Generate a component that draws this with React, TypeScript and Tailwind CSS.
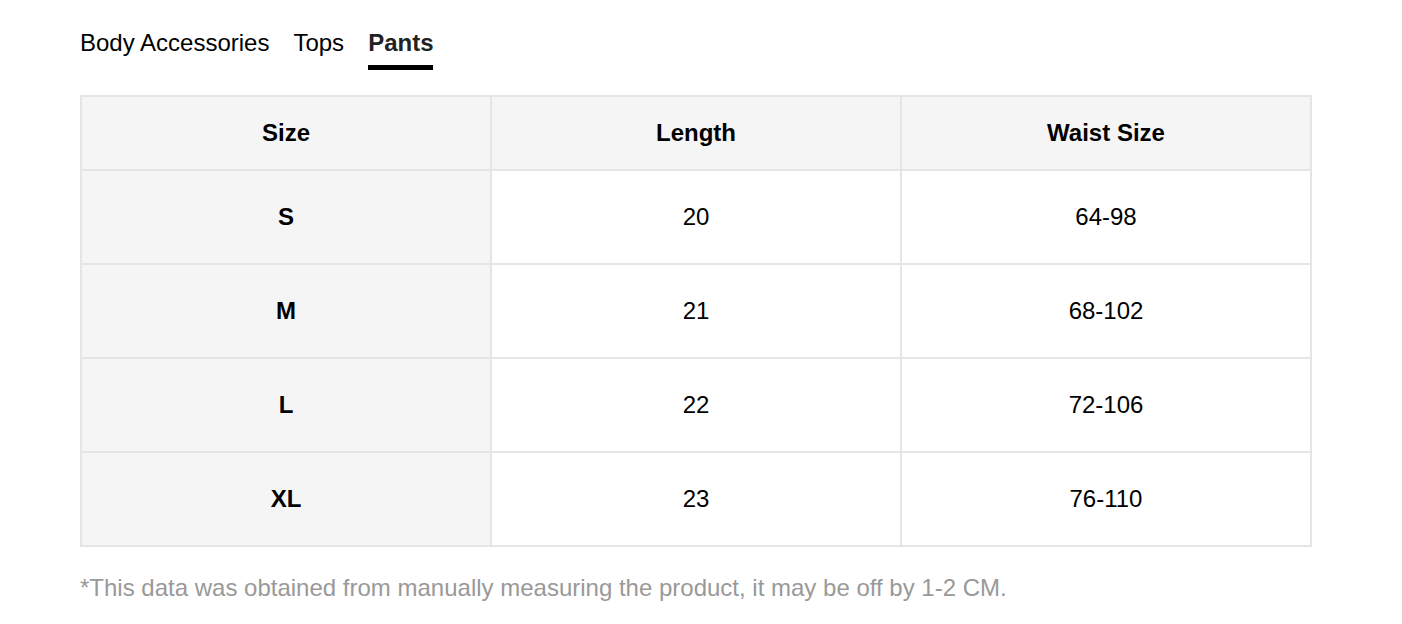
const tabs = ["Body Accessories", "Tops", "Pants"];

const rows = [
  { size: "S", length: "20", waist: "64-98" },
  { size: "M", length: "21", waist: "68-102" },
  { size: "L", length: "22", waist: "72-106" },
  { size: "XL", length: "23", waist: "76-110" },
];

export default function App() {
  const active = "Pants";
  return (
    <div className="min-h-screen bg-white pl-[80px] pt-[29px] font-['Liberation_Sans',Arial,sans-serif] text-black">
      <div className="flex gap-6">
        {tabs.map((t) => (
          <div
            key={t}
            className={
              t === active
                ? "border-b-[5px] border-black pb-[8px] text-[24px] font-bold leading-[28px] text-[#222]"
                : "border-b-[5px] border-transparent pb-[8px] text-[24px] leading-[28px]"
            }
          >
            {t}
          </div>
        ))}
      </div>

      <table className="mt-[25px] w-[1232px] table-fixed border-collapse text-[24px]">
        <thead>
          <tr className="bg-[#f5f5f5]">
            <th className="h-[74px] border-2 border-[#e5e5e5] font-bold">Size</th>
            <th className="h-[74px] border-2 border-[#e5e5e5] font-bold">Length</th>
            <th className="h-[74px] border-2 border-[#e5e5e5] font-bold">Waist Size</th>
          </tr>
        </thead>
        <tbody>
          {rows.map((r) => (
            <tr key={r.size}>
              <td className="h-[94px] border-2 border-[#e5e5e5] bg-[#f5f5f5] text-center font-bold">{r.size}</td>
              <td className="h-[94px] border-2 border-[#e5e5e5] text-center">{r.length}</td>
              <td className="h-[94px] border-2 border-[#e5e5e5] text-center">{r.waist}</td>
            </tr>
          ))}
        </tbody>
      </table>

      <p className="mt-[27px] text-[24px] leading-[28px] text-[#999]">
        *This data was obtained from manually measuring the product, it may be off by 1-2 CM.
      </p>
    </div>
  );
}
